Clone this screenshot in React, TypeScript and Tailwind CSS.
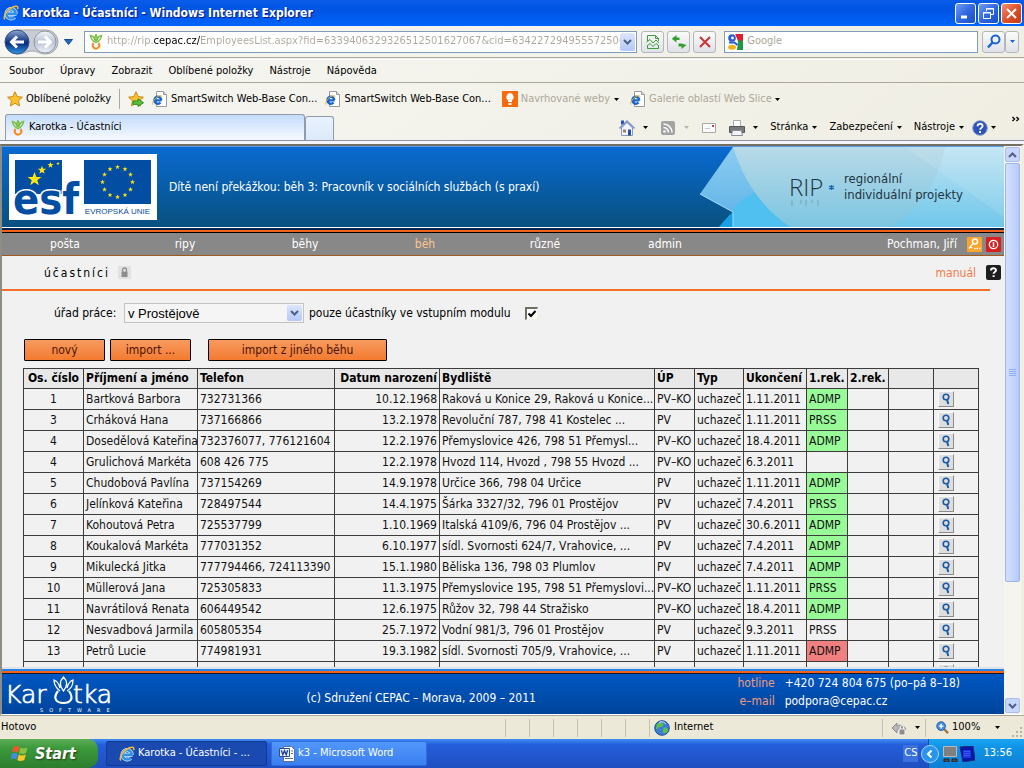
import { ReactNode } from 'react'
import clsx from 'clsx'

interface Participant {
  no: number
  name: string
  phone: string
  born: string
  address: string
  office: string
  end: string
  rec: string
  status: 'ok' | 'bad' | 'none'
}

const participants: Participant[] = [
  { no: 1, name: 'Bartková Barbora', phone: '732731366', born: '10.12.1968', address: 'Raková u Konice 29, Raková u Konice...', office: 'PV–KO', end: '1.11.2011', rec: 'ADMP', status: 'ok' },
  { no: 3, name: 'Crháková Hana', phone: '737166866', born: '13.2.1978', address: 'Revoluční 787, 798 41 Kostelec ...', office: 'PV', end: '1.11.2011', rec: 'PRSS', status: 'ok' },
  { no: 4, name: 'Dosedělová Kateřina', phone: '732376077, 776121604', born: '12.2.1976', address: 'Přemyslovice 426, 798 51 Přemysl...', office: 'PV–KO', end: '18.4.2011', rec: 'ADMP', status: 'ok' },
  { no: 4, name: 'Grulichová Markéta', phone: '608 426 775', born: '12.2.1978', address: 'Hvozd 114, Hvozd , 798 55 Hvozd ...', office: 'PV–KO', end: '6.3.2011', rec: '', status: 'none' },
  { no: 5, name: 'Chudobová Pavlína', phone: '737154269', born: '14.9.1978', address: 'Určice 366, 798 04 Určice', office: 'PV', end: '1.11.2011', rec: 'ADMP', status: 'ok' },
  { no: 6, name: 'Jelínková Kateřina', phone: '728497544', born: '14.4.1975', address: 'Šárka 3327/32, 796 01 Prostějov', office: 'PV', end: '7.4.2011', rec: 'PRSS', status: 'ok' },
  { no: 7, name: 'Kohoutová Petra', phone: '725537799', born: '1.10.1969', address: 'Italská 4109/6, 796 04 Prostějov ...', office: 'PV', end: '30.6.2011', rec: 'ADMP', status: 'ok' },
  { no: 8, name: 'Koukalová Markéta', phone: '777031352', born: '6.10.1977', address: 'sídl. Svornosti 624/7, Vrahovice, ...', office: 'PV', end: '7.4.2011', rec: 'ADMP', status: 'ok' },
  { no: 9, name: 'Mikulecká Jitka', phone: '777794466, 724113390', born: '15.1.1980', address: 'Běliska 136, 798 03 Plumlov', office: 'PV', end: '7.4.2011', rec: 'ADMP', status: 'ok' },
  { no: 10, name: 'Müllerová Jana', phone: '725305833', born: '11.3.1975', address: 'Přemyslovice 195, 798 51 Přemyslovi...', office: 'PV–KO', end: '1.11.2011', rec: 'PRSS', status: 'ok' },
  { no: 11, name: 'Navrátilová Renata', phone: '606449542', born: '12.6.1975', address: 'Růžov 32, 798 44 Stražisko', office: 'PV–KO', end: '18.4.2011', rec: 'ADMP', status: 'ok' },
  { no: 12, name: 'Nesvadbová Jarmila', phone: '605805354', born: '25.7.1972', address: 'Vodní 981/3, 796 01 Prostějov', office: 'PV', end: '9.3.2011', rec: 'PRSS', status: 'none' },
  { no: 13, name: 'Petrů Lucie', phone: '774981931', born: '19.3.1982', address: 'sídl. Svornosti 705/9, Vrahovice, ...', office: 'PV', end: '1.11.2011', rec: 'ADMP', status: 'bad' },
]

const statusColors = {
  ok: 'bg-[#98fb98]',
  bad: 'bg-[#f08080]',
  none: '',
}

const menuItems = ['Soubor', 'Úpravy', 'Zobrazit', 'Oblíbené položky', 'Nástroje', 'Nápověda']
const navItems = ['pošta', 'ripy', 'běhy', 'běh', 'různé', 'admin']

const IeIcon = ({ className = 'size-4' }: { className?: string }) => (
  <svg viewBox="0 0 16 16" className={clsx('shrink-0', className)} aria-hidden="true" fill="none">
    <path d="M13.500 8.800H5M12.800 8.800A4.700 4.700 0 1 0 11.500 12" stroke="#d5ecfc" strokeWidth="4" />
    <path d="M13.500 8.800H5M12.800 8.800A4.700 4.700 0 1 0 11.500 12" stroke="#2f8fe6" strokeWidth="2.600" />
    <path d="M1.800 14.500C-.5 11.500 4.600 4.200 10.400 1.800c3.100-1.300 5.200-.7 4.100 2.500" stroke="#f6bb35" strokeWidth="1.500" />
  </svg>
)

const IePageIcon = () => (
  <svg viewBox="0 0 16 16" className="size-4 shrink-0" aria-hidden="true">
    <path d="M4.500.5h7l3 3v12h-10z" fill="#fff" stroke="#9a9a9a" />
    <path d="M11.500.5v3h3" fill="#ddd" stroke="#9a9a9a" />
    <path d="M9.500 9.300H3M9.300 9.300A3.500 3.500 0 1 0 8.500 11.500" fill="none" stroke="#1766cf" strokeWidth="2.300" />
    <path d="M.8 13.500C0 11 3 6.500 7.500 4.800c2-.6 2.700.2 2.200 1.700" fill="none" stroke="#f0ae26" />
  </svg>
)

const CarrotIcon = () => (
  <svg viewBox="0 0 16 16" className="size-4 shrink-0" aria-hidden="true" fill="none" strokeWidth="1.500">
    <path d="M8 8.500C5 7.500 3 5 2.500 1.500 5 2 6.500 4 7 6.500M8 8.500C11 7.500 13 5 13.500 1.500 11 2 9.500 4 9 6.500M8 7C6.500 4.500 6.800 2.500 8 .8 9.200 2.500 9.500 4.500 8 7" stroke="#7bc043" />
    <path d="M5.500 8.800C3.500 11.500 5.500 14.500 8 14.800c3-.3 4.500-3.300 2.500-6" stroke="#f58a1f" strokeWidth="2" />
  </svg>
)

const StarIcon = ({ add = false }: { add?: boolean }) => (
  <svg viewBox="0 0 16 16" className="size-4 shrink-0" aria-hidden="true">
    <path d="M8 .8l2.200 4.800 5.200.6-3.900 3.500 1.100 5.200L8 12.300l-4.600 2.600 1.100-5.200L.6 6.200l5.200-.6z" fill="#fdc12f" stroke="#c98a1b" />
    {add && <path d="M5 10h5V7.800l5.500 3.900L10 15.500v-2.200H5z" fill="#5cc13c" stroke="#2b8a1e" />}
  </svg>
)

const Caret = ({ className = 'text-black' }: { className?: string }) => (
  <svg viewBox="0 0 5 3" className={clsx('h-[3px] w-[5px] shrink-0', className)} aria-hidden="true">
    <path d="M0 0h5L2.500 3z" fill="currentColor" />
  </svg>
)

const Chevron = ({ up = false }: { up?: boolean }) => (
  <svg viewBox="0 0 9 6" className={clsx('h-[6px] w-[9px]', up && 'rotate-180')} aria-hidden="true">
    <path d="M1 1l3.500 3.500L8 1" fill="none" stroke="#4d6185" strokeWidth="2" />
  </svg>
)

const ToolButton = ({ label, children, className = 'w-[23px]' }: { label: string; children: ReactNode; className?: string }) => (
  <button
    aria-label={label}
    className={clsx(
      'flex h-[22px] items-center justify-center rounded-[3px] border border-[#b4b8bd] bg-linear-to-b from-[#fbfbf9] to-[#dfe1e8]',
      className
    )}
  >
    {children}
  </button>
)

const WindowButton = ({ label, children, close = false }: { label: string; children: ReactNode; close?: boolean }) => (
  <button
    aria-label={label}
    className={clsx(
      'flex size-[21px] items-center justify-center rounded-[3px] border border-white bg-linear-to-br',
      close ? 'from-[#f0906e] via-[#e0502a] to-[#c13a12]' : 'from-[#6f9bf2] via-[#3068e0] to-[#1c4fc4]'
    )}
  >
    <svg viewBox="0 0 15 15" className="size-[15px]" fill="none" stroke="#fff" aria-hidden="true">
      {children}
    </svg>
  </button>
)

const TitleBar = () => (
  <header className="flex h-[26px] shrink-0 items-center gap-[3px] bg-linear-to-b from-[#0a5be8] via-[#0054e3] via-40% to-[#0064fc] pr-[2px] pl-[3px]">
    <IeIcon />
    <h1 className="grow text-xs font-bold text-white [text-shadow:1px_1px_1px_#0a1883]">
      Karotka - Účastníci - Windows Internet Explorer
    </h1>
    <div className="flex gap-[2px]">
      <WindowButton label="Minimalizovat">
        <path d="M3 11h6" strokeWidth="3" />
      </WindowButton>
      <WindowButton label="Obnovit">
        <path d="M5.500 5V2.500h7v6H10M2.500 6.500h7v6h-7zM5 3h8M2 7h8" />
      </WindowButton>
      <WindowButton label="Zavřít" close>
        <path d="M3 3l9 9M12 3l-9 9" strokeWidth="2" />
      </WindowButton>
    </div>
  </header>
)

const AddressBar = () => (
  <div className="flex h-8 shrink-0 items-center border-b border-[#aca899] pr-[5px] pl-1">
    <svg viewBox="0 0 56 28" className="h-7 w-14 shrink-0" role="img" aria-label="Zpět a vpřed">
      <defs>
        <linearGradient id="back" x1="0" y1="0" x2="0" y2="1">
          <stop offset="0" stopColor="#8fa6cf" />
          <stop offset=".45" stopColor="#1f3f8c" />
          <stop offset=".55" stopColor="#0b2b7d" />
          <stop offset="1" stopColor="#2f9ae8" />
        </linearGradient>
        <linearGradient id="fwd" x1="0" y1="0" x2="0" y2="1">
          <stop offset="0" stopColor="#f4f6fa" />
          <stop offset=".5" stopColor="#b9c3d4" />
          <stop offset="1" stopColor="#eef2f8" />
        </linearGradient>
      </defs>
      <path d="M14 2h28a12 12 0 0 1 0 24c-7 0-8-3-14-3s-7 3-14 3a12 12 0 0 1 0-24z" fill="#c9ccd2" stroke="#a2a6ae" />
      <circle cx="13" cy="14" r="12" fill="url(#back)" stroke="#34507f" />
      <circle cx="41" cy="14" r="11" fill="url(#fwd)" stroke="#8d97a8" />
      <path d="M20 14H8M13 8.500L7.500 14l5.500 5.500M34 14h12M41 8.500l5.500 5.500-5.500 5.500" fill="none" stroke="#fff" strokeWidth="3" />
    </svg>
    <button aria-label="Poslední stránky" className="mr-2 ml-px flex h-5 w-[15px] items-center justify-center">
      <svg viewBox="0 0 9 6" className="h-[6px] w-[9px]" aria-hidden="true">
        <path d="M.5.500h8l-4 5z" fill="#2466b4" stroke="#174b8c" />
      </svg>
    </button>
    <div className="flex h-[22px] min-w-0 grow items-center border border-[#7f9db9] bg-white pr-px pl-[3px]">
      <CarrotIcon />
      <input
        aria-label="Adresa"
        defaultValue="http://rip.cepac.cz/EmployeesList.aspx?fid=6339406329326512501627067&cid=63422729495557250065"
        className="ml-[3px] min-w-0 grow bg-linear-[to_right,#aca899_47px,#000_47px,#000_93px,#aca899_93px] bg-clip-text text-[11px] text-transparent outline-none"
      />
      <button aria-label="Zobrazit historii" className="flex h-[18px] w-[15px] items-center justify-center rounded-[2px] bg-linear-to-b from-[#dce6fd] to-[#b4c8f6]">
        <Chevron />
      </button>
    </div>
    <div className="ml-1 flex gap-[3px]">
      <ToolButton label="Zobrazení kompatibility">
        <svg viewBox="0 0 16 16" className="size-4" fill="none" stroke="#3e9c3a" aria-hidden="true">
          <path d="M2.500 7V1.500h8l3 3V7M2.500 11v3.500h11V11M10.500 1.500v3h3M1.500 8l3.500-2.500 3 3.500 3-3 3 3M2.500 11.500L5 9.500l3 3 3-3 2.500 2" />
        </svg>
      </ToolButton>
      <ToolButton label="Aktualizovat">
        <svg viewBox="0 0 16 16" className="size-4" fill="#2fa12b" aria-hidden="true">
          <path d="M5.500 1v2.500h3V6h-3v2.500L.8 4.800zM10.500 7v2.500l5 1.500-5 4v-2.500h-3V9.500h3z" />
        </svg>
      </ToolButton>
      <ToolButton label="Zastavit">
        <svg viewBox="0 0 16 16" className="size-4" fill="none" stroke="#cc3333" strokeWidth="2" aria-hidden="true">
          <path d="M3 3l10 10M13 3L3 13" />
        </svg>
      </ToolButton>
    </div>
    <div className="ml-2 flex h-[22px] w-1/4 shrink-0 items-center gap-1 border border-[#7f9db9] bg-white pl-[2px]">
      <svg viewBox="0 0 16 16" className="size-4 shrink-0" aria-hidden="true">
        <path d="M8 0h8v7h-5z" fill="#e0202a" />
        <path d="M10 6.500h6V16h-6z" fill="#1c9a42" />
        <path d="M0 0h8l3 8-1 8H0z" fill="#fff" />
        <circle cx="5" cy="4" r="3.800" fill="#2a5cd0" />
        <circle cx="5.500" cy="4" r="1.400" fill="#fff" />
        <path d="M2 8.500h5.500l3 2.500" fill="none" stroke="#2a5cd0" strokeWidth="2" />
        <ellipse cx="5" cy="13.200" rx="4" ry="2.500" fill="#f5b21c" />
      </svg>
      <input aria-label="Hledat" placeholder="Google" className="min-w-0 grow text-[11px] outline-none placeholder:text-[#aca899]" />
    </div>
    <div className="ml-1 flex">
      <ToolButton label="Hledat na webu">
        <svg viewBox="0 0 16 16" className="size-4" fill="none" stroke="#1e62d4" strokeWidth="2" aria-hidden="true">
          <circle cx="9.500" cy="5.500" r="4" />
          <path d="M6.500 8.500L2 13.500" strokeWidth="2.500" />
        </svg>
      </ToolButton>
      <ToolButton label="Možnosti hledání" className="w-[14px]">
        <Caret className="text-[#1e62d4]" />
      </ToolButton>
    </div>
  </div>
)

const FavoritesBar = () => (
  <div className="flex h-8 shrink-0 items-center pl-[7px] text-[11px] whitespace-nowrap">
    <button className="flex items-center gap-[3px]">
      <StarIcon />
      Oblíbené položky
    </button>
    <div className="mx-2 h-5 w-px bg-[#aca899]" />
    <button aria-label="Přidat na panel Oblíbené položky">
      <StarIcon add />
    </button>
    <a href="#" className="ml-2 flex items-center gap-[3px]">
      <IePageIcon />
      SmartSwitch Web-Base Con...
    </a>
    <a href="#" className="ml-2 flex items-center gap-[3px]">
      <IePageIcon />
      SmartSwitch Web-Base Con...
    </a>
    <button className="ml-[11px] flex items-center gap-[3px] text-[#aca899]">
      <svg viewBox="0 0 16 16" className="size-4" aria-hidden="true">
        <path d="M0 0h16v16H0z" fill="#f96a0b" />
        <path d="M8 2a4 4 0 0 1 2 7.200V11H6V9.200A4 4 0 0 1 8 2zM6.500 12h3v2h-3z" fill="#fff" />
      </svg>
      Navrhované weby
      <Caret className="ml-px text-black" />
    </button>
    <button className="ml-[11px] flex items-center gap-[3px] text-[#aca899]">
      <IePageIcon />
      Galerie oblastí Web Slice
      <Caret />
    </button>
  </div>
)

const TabBar = () => (
  <>
    <div className="flex h-[26px] shrink-0 items-end border-b border-[#8f90a8] pl-[5px] text-[11px] whitespace-nowrap">
      <button className="flex h-[26px] w-[300px] items-center gap-[3px] rounded-t-[3px] border border-b-0 border-[#919bab] bg-linear-to-b from-[#c4dcfb] to-[#f6f9fe] pl-1">
        <CarrotIcon />
        Karotka - Účastníci
      </button>
      <button aria-label="Nová karta" className="h-[24px] w-[29px] rounded-t-[3px] border border-b-0 border-[#919bab] bg-linear-to-b from-[#e9f2fe] to-[#dce9fb]" />
      <div className="ml-auto flex h-full items-center gap-3 pr-1">
        <button className="flex items-center gap-2" aria-label="Domů">
          <svg viewBox="0 0 16 16" className="size-4" aria-hidden="true">
            <path d="M2.500 8v7.500h11V8L8 2.500z" fill="#f2f5fb" stroke="#8a99b4" />
            <path d="M2 .5h3v4H2z" fill="#2e4fc0" />
            <path d="M.5 8.500L8 1.200l7.500 7.300" fill="none" stroke="#7d95c8" strokeWidth="1.600" />
            <path d="M9 9.500h3v6H9z" fill="#2a4fa8" />
            <path d="M4 9.500h3v3H4z" fill="#9d7f66" />
          </svg>
          <Caret />
        </button>
        <button className="flex items-center gap-2" aria-label="Informační kanály">
          <svg viewBox="0 0 16 16" className="size-4" aria-hidden="true">
            <rect x="1" y="1" width="14" height="14" rx="2" fill="#a3a3a3" />
            <circle cx="4.500" cy="11.500" r="1.300" fill="#fff" />
            <path d="M3.500 7.500a5 5 0 0 1 5 5M3.500 4a8.500 8.500 0 0 1 8.500 8.500" fill="none" stroke="#fff" strokeWidth="1.500" />
          </svg>
          <Caret className="text-[#b8b5a5]" />
        </button>
        <button aria-label="Číst poštu">
          <svg viewBox="0 0 16 16" className="size-4" aria-hidden="true">
            <path d="M1.500 3.500h13v9h-13z" fill="#fcfcfc" stroke="#a9a9a9" />
            <path d="M4 8.500h5" stroke="#c9c9c9" />
            <path d="M11 5h2v2h-2z" fill="#e03c3c" />
          </svg>
        </button>
        <button className="flex items-center gap-2" aria-label="Tisk">
          <svg viewBox="0 0 16 16" className="size-4" aria-hidden="true">
            <path d="M4.500.5h7v6h-7z" fill="#fff" stroke="#aaa" />
            <path d="M.5 6.500h15v6H.5z" fill="#77797d" stroke="#55575b" />
            <path d="M3.500 10.500h9l1 5h-11z" fill="#f2f5f8" stroke="#8a8c90" />
          </svg>
          <Caret />
        </button>
        {['Stránka', 'Zabezpečení', 'Nástroje'].map((label) => (
          <button key={label} className="flex items-center gap-1">
            {label}
            <Caret />
          </button>
        ))}
        <button className="-ml-1 flex items-center gap-[3px]" aria-label="Nápověda">
          <svg viewBox="0 0 16 16" className="size-4" aria-hidden="true">
            <circle cx="8" cy="8" r="7.300" fill="#2d55b8" stroke="#8b9dc4" />
            <path d="M5.500 6.200C5.500 3 10.600 3 10.600 6c0 1.800-2.500 1.900-2.500 3.800M8.100 11v2" fill="none" stroke="#fff" strokeWidth="1.800" />
          </svg>
          <Caret />
        </button>
        <button aria-label="Další příkazy" className="ml-1 self-start pt-px">
          <svg viewBox="0 0 8 5" className="h-[6px] w-2" aria-hidden="true">
            <path d="M.5.500l2 2-2 2M4.500.500l2 2-2 2" fill="none" stroke="#000" strokeWidth="1.400" />
          </svg>
        </button>
      </div>
    </div>
    <div className="h-[3px] shrink-0 bg-[#f4f5fa]" />
  </>
)

const starPoints = '0,-3 .8,-.9 3,-.9 1.200,.5 1.900,2.700 0,1.400 -1.900,2.700 -1.200,.5 -3,-.9 -.8,-.9'

const EsfLogo = () => (
  <svg viewBox="0 0 148 66" className="h-[66px] w-[148px] shrink-0 overflow-visible" role="img" aria-label="esf Evropská unie">
    <path d="M0 0h148v66H0z" fill="#fff" />
    <path d="M6 6h47v34H6zM75 6h67v44H75z" fill="#034ea2" />
    <text
      x="4"
      y="60"
      fontSize="43"
      fontWeight="700"
      fill="#034ea2"
      stroke="#fff"
      strokeWidth="3"
      paintOrder="stroke"
      fontFamily="DejaVu Sans Condensed, sans-serif"
    >
      esf
    </text>
    <g fill="#ffe512">
      <polygon points={starPoints} transform="translate(25.500 25) scale(2.300)" />
      <polygon points={starPoints} transform="translate(33 16) scale(1.400)" />
      <polygon points={starPoints} transform="translate(41.500 11)" />
      <polygon points={starPoints} transform="translate(49 9.500) scale(.6)" />
      {Array.from({ length: 12 }, (_, i) => (
        <polygon
          key={i}
          points={starPoints}
          transform={`translate(${108.5 + 15 * Math.sin((i * Math.PI) / 6)} ${28 - 15 * Math.cos((i * Math.PI) / 6)}) scale(.8)`}
        />
      ))}
    </g>
    <text x="108.500" y="60" textAnchor="middle" fontSize="8" fill="#034ea2" fontFamily="Liberation Sans, sans-serif">
      EVROPSKÁ UNIE
    </text>
  </svg>
)

const RipBanner = () => (
  <svg viewBox="0 0 304 81" className="h-[81px] w-[304px] shrink-0" role="img" aria-label="RIP regionální individuální projekty">
    <defs>
      <linearGradient id="sky" x1="0" y1="0" x2="0" y2="1">
        <stop offset="0" stopColor="#bfe3f3" />
        <stop offset="1" stopColor="#6fc7ea" />
      </linearGradient>
      <linearGradient id="diamond" x1="0" y1="0" x2="0" y2="1">
        <stop offset="0" stopColor="#8ccdf2" />
        <stop offset="1" stopColor="#5bb0e6" />
      </linearGradient>
    </defs>
    <path d="M18 81c5-6 9-11 15-16h60v16z" fill="#18a0e4" />
    <path d="M0 47L33 0h60v81H48V65H33z" fill="url(#diamond)" />
    <path d="M33 61c9-8 16-13 24-17l48 37H33z" fill="#4fc0f0" />
    <path d="M33 0h271v81H92C62 62 44 34 33 0z" fill="url(#sky)" />
    <path d="M33 0h212C238 34 222 60 190 81H92C62 62 44 34 33 0z" fill="#a3bfc7" opacity=".25" />
    <path d="M205 0l99 70V0z" fill="#fff" opacity=".1" />
    <path d="M0 47l33 18v16" fill="none" stroke="#a5def7" />
    <g fontFamily="DejaVu Sans Condensed, sans-serif" fill="#22343f">
      <text x="89" y="49" fontSize="24" fontWeight="300" fontFamily="Open Sans, sans-serif">RIP</text>
      <text x="144" y="36" fontSize="13">regionální</text>
      <text x="144" y="52" fontSize="13">individuální projekty</text>
    </g>
    <path d="M92 53v6M101 53v4M106 53v6M112 53v3M118 53v6" stroke="#5a7d8d" opacity=".5" />
    <path d="M131.500 38v5M129 39l5 3M134 39l-5 3" stroke="#1767b4" strokeWidth="1.300" />
  </svg>
)

const SiteHeader = () => (
  <header className="flex h-[81px] shrink-0 items-center border-t border-[#5b9ce8] bg-linear-to-b from-[#0a6ad2] to-[#09507f] pl-[7px] text-white">
    <EsfLogo />
    <p className="grow pl-3 text-xs font-medium whitespace-nowrap">
      Dítě není překážkou: běh 3: Pracovník v sociálních službách (s praxí)
    </p>
    <RipBanner />
  </header>
)

const NavBar = () => (
  <nav className="flex h-[23px] shrink-0 items-center border-b border-[#a05a1e] bg-[#888] pr-[3px] pl-[3px] text-xs text-white">
    {navItems.map((item) => (
      <a key={item} href="#" className={clsx('w-[120px] text-center', item === 'běh' && 'text-[#fbc58f]')}>
        {item}
      </a>
    ))}
    <span className="ml-auto">Pochman, Jiří</span>
    <button aria-label="Změna hesla" className="ml-[10px]">
      <svg viewBox="0 0 15 15" className="size-[15px]" aria-hidden="true">
        <rect width="15" height="15" rx="1" fill="#f9a42b" />
        <circle cx="8" cy="4.500" r="2.500" fill="none" stroke="#fff" strokeWidth="1.500" />
        <path d="M6 6.500l-4 5M3 9.500l2 1.500M7 11.500h1.500M9.500 11.500H11M12 11.500h1.500" stroke="#fff" strokeWidth="1.300" />
      </svg>
    </button>
    <button aria-label="Odhlásit" className="ml-1">
      <svg viewBox="0 0 15 15" className="size-[15px]" aria-hidden="true">
        <rect width="15" height="15" rx="1" fill="#d81e1e" />
        <circle cx="7.500" cy="7.500" r="4.200" fill="none" stroke="#fff" strokeWidth="1.300" />
        <path d="M7.500 5v5" stroke="#fff" strokeWidth="1.500" />
      </svg>
    </button>
  </nav>
)

const PageHeading = () => (
  <div className="flex h-[33px] shrink-0 items-center pr-[3px] pl-[42px] text-xs">
    <h2 className="tracking-[2px]">účastníci</h2>
    <svg viewBox="0 0 13 13" className="ml-2 size-[13px]" aria-hidden="true">
      <path d="M0 0h13v13H0z" fill="#e2e2e2" />
      <path d="M3.500 5.500h6V11h-6z" fill="#8c8c8c" />
      <path d="M4.500 5.500V4a2 2 0 0 1 4 0v1.500" fill="none" stroke="#8c8c8c" strokeWidth="1.300" />
    </svg>
    <a href="#" className="ml-auto text-[#f27b45]">manuál</a>
    <button aria-label="Nápověda k stránce" className="ml-[10px]">
      <svg viewBox="0 0 15 15" className="size-[15px]" aria-hidden="true">
        <rect width="15" height="15" rx="2" fill="#1e1e1e" />
        <path d="M5 5.500C5 2.500 10 2.500 10 5.300c0 1.700-2.400 1.700-2.400 3.400M7.600 10.200v1.900" fill="none" stroke="#fff" strokeWidth="2" />
      </svg>
    </button>
  </div>
)

const Filters = () => (
  <div className="flex items-center pt-3 pl-[52px] text-xs whitespace-nowrap">
    <label htmlFor="office" className="w-[70px]">úřad práce:</label>
    <div className="relative">
      <select
        id="office"
        className="h-5 w-[180px] appearance-none border border-[#c3c3c3] bg-[#f5f5f5] pl-[3px] font-['Liberation_Sans',sans-serif] text-[13px] leading-none"
      >
        <option>v Prostějově</option>
      </select>
      <span className="pointer-events-none absolute top-[2px] right-[2px] flex h-4 w-[15px] items-center justify-center rounded-[2px] bg-linear-to-b from-[#dce6fd] to-[#b4c8f6]">
        <Chevron />
      </span>
    </div>
    <label htmlFor="entry" className="ml-[5px]">pouze účastníky ve vstupním modulu</label>
    <div className="ml-[14px] grid">
      <input
        id="entry"
        type="checkbox"
        defaultChecked
        className="peer col-start-1 row-start-1 size-[13px] appearance-none border-t-2 border-r border-b border-l-2 border-t-[#716f64] border-r-[#f1efe2] border-b-[#f1efe2] border-l-[#716f64] bg-white"
      />
      <svg viewBox="0 0 13 13" className="pointer-events-none invisible col-start-1 row-start-1 size-[13px] peer-checked:visible" aria-hidden="true">
        <path d="M3.500 6.500L6 9l4.500-5" fill="none" stroke="#000" strokeWidth="2" />
      </svg>
    </div>
  </div>
)

const ActionButton = ({ label, className = 'w-[81px]' }: { label: string; className?: string }) => (
  <button
    className={clsx(
      'h-[22px] rounded-[1px] border border-black bg-linear-to-b from-[#f79a5e] to-[#f37b2e] text-center text-[#4a1403]',
      className
    )}
  >
    {label}
  </button>
)

const DetailButton = () => (
  <button
    aria-label="Detail"
    className="ml-[2px] flex size-4 items-center justify-center border border-[#fafafa] border-r-[#8c8c8c] border-b-[#8c8c8c] bg-[#dedede]"
  >
    <svg viewBox="0 0 12 12" className="size-3" fill="none" stroke="#1b5aa6" aria-hidden="true">
      <circle cx="6" cy="4" r="2.800" strokeWidth="1.600" />
      <path d="M7 6.500l1.300 4.500" strokeWidth="2" />
    </svg>
  </button>
)

const ParticipantsTable = () => (
  <div className="mt-[7px] mr-[25px] ml-[21px]">
    <table className="w-full table-fixed border-collapse text-xs leading-[20px] whitespace-nowrap text-[#111] [&_td]:h-[21px] [&_td]:border [&_td]:border-[#3c3c3c] [&_td]:px-[2px] [&_td]:py-0 [&_th]:h-5 [&_th]:border [&_th]:border-[#3c3c3c] [&_th]:p-0 [&_th]:px-[2px] [&_th]:leading-[19px]">
      <colgroup>
        <col className="w-[60px]" />
        <col className="w-[114px]" />
        <col className="w-[137px]" />
        <col className="w-[105px]" />
        <col className="w-[215px]" />
        <col className="w-[40px]" />
        <col className="w-[49px]" />
        <col className="w-[63px]" />
        <col className="w-[41px]" />
        <col className="w-[41px]" />
        <col className="w-[45px]" />
        <col className="w-[45px]" />
      </colgroup>
      <thead className="bg-[#e8e8e8] text-left text-black">
        <tr>
          <th className="text-center">Os. číslo</th>
          <th>Příjmení a jméno</th>
          <th>Telefon</th>
          <th className="text-right">Datum narození</th>
          <th>Bydliště</th>
          <th>ÚP</th>
          <th>Typ</th>
          <th>Ukončení</th>
          <th>1.rek.</th>
          <th>2.rek.</th>
          <th />
          <th />
        </tr>
      </thead>
      <tbody>
        {participants.map((p) => (
          <tr key={p.name}>
            <td className="text-center">{p.no}</td>
            <td>{p.name}</td>
            <td>{p.phone}</td>
            <td className="text-right">{p.born}</td>
            <td>{p.address}</td>
            <td>{p.office}</td>
            <td>uchazeč</td>
            <td>{p.end}</td>
            <td className={statusColors[p.status]}>{p.rec}</td>
            <td />
            <td />
            <td>
              <DetailButton />
            </td>
          </tr>
        ))}
        <tr>
          {Array.from({ length: 11 }, (_, i) => (
            <td key={i} />
          ))}
          <td>
            <DetailButton />
          </td>
        </tr>
      </tbody>
    </table>
  </div>
)

const SiteFooter = () => (
  <footer className="shrink-0 text-xs font-medium text-white">
    <div className="h-[2px] bg-[#dfe3e8]" />
    <div className="h-[2px] bg-[#2a84e8]" />
    <div className="h-[2px] bg-[#f0621a]" />
    <div className="h-px bg-[#10182c]" />
    <div className="flex h-10 items-start bg-linear-to-b from-[#0058c4] to-[#00449a]">
      <svg viewBox="0 0 115 40" className="h-10 w-[115px] shrink-0" role="img" aria-label="Karotka software">
        <g fill="none" stroke="#fff" strokeWidth="1.300">
          <path d="M58 17c-4-3-6-6-6-11 3 1 5 4 6 8M65 17c5-3 6-6 6-11-3 1-5 4-6 8M61.500 17c-4-5-4-10 0-14 4 4 4 9 0 14z" />
          <path d="M56 17c-6 8-1 12 5.500 12s11-4 5.500-12" strokeWidth="2.200" />
        </g>
        <g fill="#fff" fontFamily="DejaVu Sans, sans-serif">
          <g fontSize="25" fontWeight="200" stroke="#fff" strokeWidth=".7">
            <text x="3" y="29">Kar</text>
            <text x="71" y="29">tka</text>
          </g>
          <text x="38" y="38" fontSize="5" letterSpacing="6">SOFTWARE</text>
        </g>
      </svg>
      <p className="grow pt-4 pr-3 text-center">(c) Sdružení CEPAC – Morava, 2009 – 2011</p>
      <dl className="mr-11 grid shrink-0 grid-cols-[auto_auto] gap-x-[10px] leading-[18px]">
        <dt className="text-right text-[#f19a7c]">hotline</dt>
        <dd>+420 724 804 675 (po–pá 8–18)</dd>
        <dt className="text-right text-[#f19a7c]">e–mail</dt>
        <dd>podpora@cepac.cz</dd>
      </dl>
    </div>
  </footer>
)

const Scrollbar = () => (
  <div className="flex w-[17px] shrink-0 flex-col items-center gap-px bg-[#f5f4ee] p-px">
    <button aria-label="Nahoru" className="flex h-[15px] w-full shrink-0 items-center justify-center rounded-[2px] border border-[#a9bdf0] bg-[#c6d6fc]">
      <Chevron up />
    </button>
    <div className="flex w-full grow-[420] basis-0 items-center justify-center rounded-[2px] border border-[#9db5ec] bg-linear-to-r from-[#d3e0fe] to-[#b7cbfb]">
      <span className="flex w-[7px] flex-col gap-px">
        <span className="h-px bg-[#8cb0f8]" />
        <span className="h-px bg-[#8cb0f8]" />
        <span className="h-px bg-[#8cb0f8]" />
        <span className="h-px bg-[#8cb0f8]" />
      </span>
    </div>
    <div className="grow-[115] basis-0" />
    <button aria-label="Dolů" className="flex h-[15px] w-full shrink-0 items-center justify-center rounded-[2px] border border-[#a9bdf0] bg-[#c6d6fc]">
      <Chevron />
    </button>
  </div>
)

const StatusBar = () => (
  <div className="flex h-6 shrink-0 items-center border-t border-[#aca899] bg-[#ece9d8] pl-[1px] text-[11px]">
    <span className="grow">Hotovo</span>
    {Array.from({ length: 6 }, (_, i) => (
      <span key={i} className="h-[18px] w-6 border-l border-[#c5c2b2]" />
    ))}
    <span className="flex h-[18px] w-[233px] items-center gap-1 border-l border-[#c5c2b2] pl-1">
      <svg viewBox="0 0 16 16" className="size-4" aria-hidden="true">
        <circle cx="8" cy="8" r="7.300" fill="#3b7ed6" stroke="#1d4c94" />
        <path d="M3 4c2-2 5-2 6 0s-1 3-3 3-2 3-4 2zM10 8c2-1 4 0 4 2s-2 4-4 3-1-4 0-5z" fill="#58c04b" />
        <path d="M5 2.500C8 1 10 2 12 4" fill="none" stroke="#d5ecff" />
      </svg>
      Internet
    </span>
    <button aria-label="Chráněný režim" className="flex h-[18px] w-[43px] items-center gap-2 border-l border-[#c5c2b2] pl-2">
      <svg viewBox="0 0 16 16" className="size-4" aria-hidden="true">
        <path d="M1 8l5-5v3c4-2 8 0 9 4-2-2-6-2-9 0v3z" fill="#b7b7b7" stroke="#8d8d8d" />
        <path d="M8 9h6v6H8zM9.500 9V7a1.500 1.500 0 0 1 3 0v2" fill="#8d8d8d" stroke="#f3f3f3" />
      </svg>
      <Caret />
    </button>
    <button className="flex h-[18px] w-[84px] items-center gap-[3px] border-l border-[#c5c2b2] pl-[10px]">
      <svg viewBox="0 0 14 14" className="size-[13px] shrink-0" aria-hidden="true">
        <path d="M8.500 8.500l4.500 4.500" stroke="#a47642" strokeWidth="2.500" />
        <circle cx="5.500" cy="5.500" r="4.700" fill="#3f8de2" stroke="#2b5da0" />
        <path d="M5.500 3v5M3 5.500h5" stroke="#fff" strokeWidth="1.500" />
      </svg>
      100%
      <span className="ml-3">
        <Caret />
      </span>
    </button>
    <svg viewBox="0 0 15 15" className="size-[15px] shrink-0 self-end" fill="#b8b4a2" aria-hidden="true">
      <path d="M11 3h2v2h-2zM7 7h2v2H7zM11 7h2v2h-2zM3 11h2v2H3zM7 11h2v2H7zM11 11h2v2h-2z" />
    </svg>
  </div>
)

const Taskbar = () => (
  <div className="flex h-[29px] shrink-0 items-center bg-linear-to-b from-[#3f8cf3] via-[#245edb] via-20% to-[#1f4fc0] text-[11px] text-white">
    <button className="flex h-full w-[98px] items-center gap-[6px] rounded-r-[10px] bg-linear-to-b from-[#5eac56] via-[#3c9a3c] via-30% to-[#2d7e2d] pl-[11px] text-base font-bold italic [text-shadow:1px_1px_2px_#1d3f12]">
      <svg viewBox="0 0 18 17" className="h-[17px] w-[18px]" aria-hidden="true">
        <path d="M2.500 2c2-1.500 4-1.500 6 0L7 7.500c-2-1.300-4-1.300-6 0z" fill="#f0582b" />
        <path d="M9.500 2.500c2 1.300 4 1.300 7 0L15 8c-3 1.300-5 1.300-7 0z" fill="#87c540" />
        <path d="M.8 9c2-1.300 4-1.300 6 0L5.300 14.500c-2-1.300-4-1.300-5.300 0z" fill="#3f8eea" />
        <path d="M7.800 9.500c2 1.300 4 1.300 7 0L13.300 15c-3 1.300-5 1.300-7 0z" fill="#fcc62a" />
      </svg>
      Start
    </button>
    <button className="ml-2 flex h-[25px] w-[161px] items-center gap-[3px] rounded-[2px] border border-[#123a94] bg-[#1a4ab0] pl-3">
      <IeIcon />
      Karotka - Účastníci - ...
    </button>
    <button className="ml-1 flex h-[25px] w-[156px] items-center gap-[3px] rounded-[2px] border border-[#2f6ce0] bg-linear-to-b from-[#5297fb] to-[#3a7ff0] pl-[7px]">
      <svg viewBox="0 0 16 16" className="size-4" aria-hidden="true">
        <path d="M4.500.5h8l3 3v12h-11z" fill="#fff" stroke="#5a6f9c" />
        <path d="M12 5h2M12 7.500h2M6 12.500h8" stroke="#5a6f9c" />
        <path d="M.5 2.500h10v8H.5z" fill="#e8eefc" stroke="#2a4d9c" />
        <path d="M2.300 4.300l1.500 4.400 1.700-4 1.700 4 1.500-4.400" fill="none" stroke="#1d3f94" strokeWidth="1.300" />
      </svg>
      k3 - Microsoft Word
    </button>
    <span className="mr-[10px] ml-auto bg-[#3b71dd] px-px">CS</span>
    <div className="flex h-full items-center gap-1 border-l border-[#0f4ea8] bg-linear-to-b from-[#1aa5f2] via-[#0f93e6] via-30% to-[#0d80d4] pr-3">
      <button aria-label="Zobrazit skryté ikony" className="-ml-2">
        <svg viewBox="0 0 18 18" className="size-[18px]" aria-hidden="true">
          <circle cx="9" cy="9" r="8.500" fill="#2a94ea" stroke="#a4d4fa" />
          <path d="M10.500 5.500L7 9l3.500 3.500" fill="none" stroke="#fff" strokeWidth="2" />
        </svg>
      </button>
      <svg viewBox="0 0 32 16" className="h-4 w-8" aria-hidden="true">
        <path d="M.5.500h13v10H.5z" fill="#808080" stroke="#b9b9b9" />
        <path d="M1 13h5v3H1zM9 13h5v3H9z" fill="#4c4c4c" stroke="#222" />
        <path d="M17 1l13-1 2 14-12 2z" fill="#0a16a8" stroke="#1c2f6e" />
        <path d="M20 4h8v8h-8z" fill="#1b36e0" />
        <path d="M22 5v6M24 5v6M26 5v6" stroke="#5c7cff" strokeDasharray="1 1" />
      </svg>
      <time className="ml-1">13:56</time>
    </div>
  </div>
)

export default function App() {
  return (
    <div className="flex h-screen flex-col overflow-hidden bg-linear-to-br from-[#f6f6f3] to-[#ece9d8] font-['DejaVu_Sans_Condensed','DejaVu_Sans',sans-serif] text-black">
      <TitleBar />
      <AddressBar />
      <nav className="mt-px flex h-6 shrink-0 items-center gap-4 border-y border-t-white border-b-[#aca899] pl-[9px] text-[11px]">
        {menuItems.map((item) => (
          <button key={item}>{item}</button>
        ))}
      </nav>
      <FavoritesBar />
      <TabBar />

      <div className="flex min-h-0 grow border-t-2 border-r-3 border-b border-l-2 border-t-[#716f64] border-r-[#f1efe2] border-b-white border-l-[#8f8d82]">
        <main className="flex min-w-0 grow flex-col bg-[#f1f1f1]">
          <SiteHeader />
          <div className="h-px shrink-0 bg-white" />
          <div className="h-[2px] shrink-0 bg-[#0a2350]" />
          <div className="h-[2px] shrink-0 bg-[#f0621a]" />
          <div className="h-px shrink-0 bg-black" />
          <NavBar />
          <PageHeading />
          <div className="mr-[14px] h-[2px] shrink-0 bg-[#f56e28]" />
          <section className="min-h-0 grow overflow-hidden">
            <Filters />
            <div className="mt-4 flex pl-[22px] text-xs">
              <ActionButton label="nový" />
              <ActionButton label="import ..." className="ml-[5px] w-[81px]" />
              <ActionButton label="import z jiného běhu" className="ml-[17px] w-[179px]" />
            </div>
            <ParticipantsTable />
          </section>
          <SiteFooter />
        </main>
        <Scrollbar />
      </div>

      <StatusBar />
      <Taskbar />
    </div>
  )
}
